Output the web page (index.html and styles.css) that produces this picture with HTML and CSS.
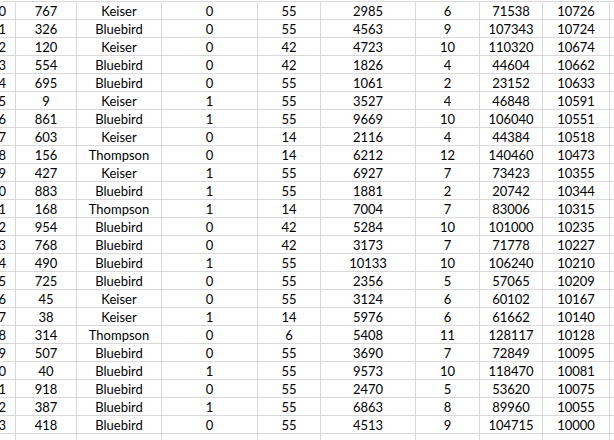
FILE: index.html
```html
<!DOCTYPE html>
<html>
<head>
<meta charset="utf-8">
<link rel="stylesheet" href="styles.css">
</head>
<body>
<div class="wrap">
<div class="sheet">
<div class="row"><div class="c n">10</div><div class="c">767</div><div class="c">Keiser</div><div class="c">0</div><div class="c">55</div><div class="c">2985</div><div class="c">6</div><div class="c">71538</div><div class="c">10726</div><div class="c"></div></div>
<div class="row"><div class="c n">11</div><div class="c">326</div><div class="c">Bluebird</div><div class="c">0</div><div class="c">55</div><div class="c">4563</div><div class="c">9</div><div class="c">107343</div><div class="c">10724</div><div class="c"></div></div>
<div class="row"><div class="c n">12</div><div class="c">120</div><div class="c">Keiser</div><div class="c">0</div><div class="c">42</div><div class="c">4723</div><div class="c">10</div><div class="c">110320</div><div class="c">10674</div><div class="c"></div></div>
<div class="row"><div class="c n">13</div><div class="c">554</div><div class="c">Bluebird</div><div class="c">0</div><div class="c">42</div><div class="c">1826</div><div class="c">4</div><div class="c">44604</div><div class="c">10662</div><div class="c"></div></div>
<div class="row"><div class="c n">14</div><div class="c">695</div><div class="c">Bluebird</div><div class="c">0</div><div class="c">55</div><div class="c">1061</div><div class="c">2</div><div class="c">23152</div><div class="c">10633</div><div class="c"></div></div>
<div class="row"><div class="c n">15</div><div class="c">9</div><div class="c">Keiser</div><div class="c">1</div><div class="c">55</div><div class="c">3527</div><div class="c">4</div><div class="c">46848</div><div class="c">10591</div><div class="c"></div></div>
<div class="row"><div class="c n">16</div><div class="c">861</div><div class="c">Bluebird</div><div class="c">1</div><div class="c">55</div><div class="c">9669</div><div class="c">10</div><div class="c">106040</div><div class="c">10551</div><div class="c"></div></div>
<div class="row"><div class="c n">17</div><div class="c">603</div><div class="c">Keiser</div><div class="c">0</div><div class="c">14</div><div class="c">2116</div><div class="c">4</div><div class="c">44384</div><div class="c">10518</div><div class="c"></div></div>
<div class="row"><div class="c n">18</div><div class="c">156</div><div class="c">Thompson</div><div class="c">0</div><div class="c">14</div><div class="c">6212</div><div class="c">12</div><div class="c">140460</div><div class="c">10473</div><div class="c"></div></div>
<div class="row"><div class="c n">19</div><div class="c">427</div><div class="c">Keiser</div><div class="c">1</div><div class="c">55</div><div class="c">6927</div><div class="c">7</div><div class="c">73423</div><div class="c">10355</div><div class="c"></div></div>
<div class="row"><div class="c n">20</div><div class="c">883</div><div class="c">Bluebird</div><div class="c">1</div><div class="c">55</div><div class="c">1881</div><div class="c">2</div><div class="c">20742</div><div class="c">10344</div><div class="c"></div></div>
<div class="row"><div class="c n">21</div><div class="c">168</div><div class="c">Thompson</div><div class="c">1</div><div class="c">14</div><div class="c">7004</div><div class="c">7</div><div class="c">83006</div><div class="c">10315</div><div class="c"></div></div>
<div class="row"><div class="c n">22</div><div class="c">954</div><div class="c">Bluebird</div><div class="c">0</div><div class="c">42</div><div class="c">5284</div><div class="c">10</div><div class="c">101000</div><div class="c">10235</div><div class="c"></div></div>
<div class="row"><div class="c n">23</div><div class="c">768</div><div class="c">Bluebird</div><div class="c">0</div><div class="c">42</div><div class="c">3173</div><div class="c">7</div><div class="c">71778</div><div class="c">10227</div><div class="c"></div></div>
<div class="row"><div class="c n">24</div><div class="c">490</div><div class="c">Bluebird</div><div class="c">1</div><div class="c">55</div><div class="c">10133</div><div class="c">10</div><div class="c">106240</div><div class="c">10210</div><div class="c"></div></div>
<div class="row"><div class="c n">25</div><div class="c">725</div><div class="c">Bluebird</div><div class="c">0</div><div class="c">55</div><div class="c">2356</div><div class="c">5</div><div class="c">57065</div><div class="c">10209</div><div class="c"></div></div>
<div class="row"><div class="c n">26</div><div class="c">45</div><div class="c">Keiser</div><div class="c">0</div><div class="c">55</div><div class="c">3124</div><div class="c">6</div><div class="c">60102</div><div class="c">10167</div><div class="c"></div></div>
<div class="row"><div class="c n">27</div><div class="c">38</div><div class="c">Keiser</div><div class="c">1</div><div class="c">14</div><div class="c">5976</div><div class="c">6</div><div class="c">61662</div><div class="c">10140</div><div class="c"></div></div>
<div class="row"><div class="c n">28</div><div class="c">314</div><div class="c">Thompson</div><div class="c">0</div><div class="c">6</div><div class="c">5408</div><div class="c">11</div><div class="c">128117</div><div class="c">10128</div><div class="c"></div></div>
<div class="row"><div class="c n">29</div><div class="c">507</div><div class="c">Bluebird</div><div class="c">0</div><div class="c">55</div><div class="c">3690</div><div class="c">7</div><div class="c">72849</div><div class="c">10095</div><div class="c"></div></div>
<div class="row"><div class="c n">30</div><div class="c">40</div><div class="c">Bluebird</div><div class="c">1</div><div class="c">55</div><div class="c">9573</div><div class="c">10</div><div class="c">118470</div><div class="c">10081</div><div class="c"></div></div>
<div class="row"><div class="c n">31</div><div class="c">918</div><div class="c">Bluebird</div><div class="c">0</div><div class="c">55</div><div class="c">2470</div><div class="c">5</div><div class="c">53620</div><div class="c">10075</div><div class="c"></div></div>
<div class="row"><div class="c n">32</div><div class="c">387</div><div class="c">Bluebird</div><div class="c">1</div><div class="c">55</div><div class="c">6863</div><div class="c">8</div><div class="c">89960</div><div class="c">10055</div><div class="c"></div></div>
<div class="row"><div class="c n">33</div><div class="c">418</div><div class="c">Bluebird</div><div class="c">0</div><div class="c">55</div><div class="c">4513</div><div class="c">9</div><div class="c">104715</div><div class="c">10000</div><div class="c"></div></div>
<div class="row"><div class="c n"></div><div class="c"></div><div class="c"></div><div class="c"></div><div class="c"></div><div class="c"></div><div class="c"></div><div class="c"></div><div class="c"></div><div class="c"></div></div>
</div>
</div>
</body>
</html>
```
FILE: styles.css
```css
html, body {
  margin: 0;
  padding: 0;
  background: #ffffff;
  overflow: hidden;
}
.wrap {
  padding-top: 1px;
  background: #ffffff;
  height: 439px;
  overflow: hidden;
}
.sheet {
  display: flex;
  flex-direction: column;
  gap: 1px;
  padding-top: 1px;
  background: #d9d9d9;
}
.row {
  display: grid;
  grid-template-columns: 15px 60px 84px 95px 62px 94px 63px 62px 66px 1fr;
  column-gap: 1px;
}
.c {
  background: #ffffff;
  height: 17px;
  box-sizing: border-box;
  padding-top: 1px;
  line-height: 16px;
  font-family: Lato, "Liberation Sans", sans-serif;
  font-size: 13px;
  color: #000000;
  text-align: center;
  white-space: nowrap;
  overflow: hidden;
}
.n {
  display: flex;
  justify-content: flex-end;
  padding-right: 9px;
}
```
